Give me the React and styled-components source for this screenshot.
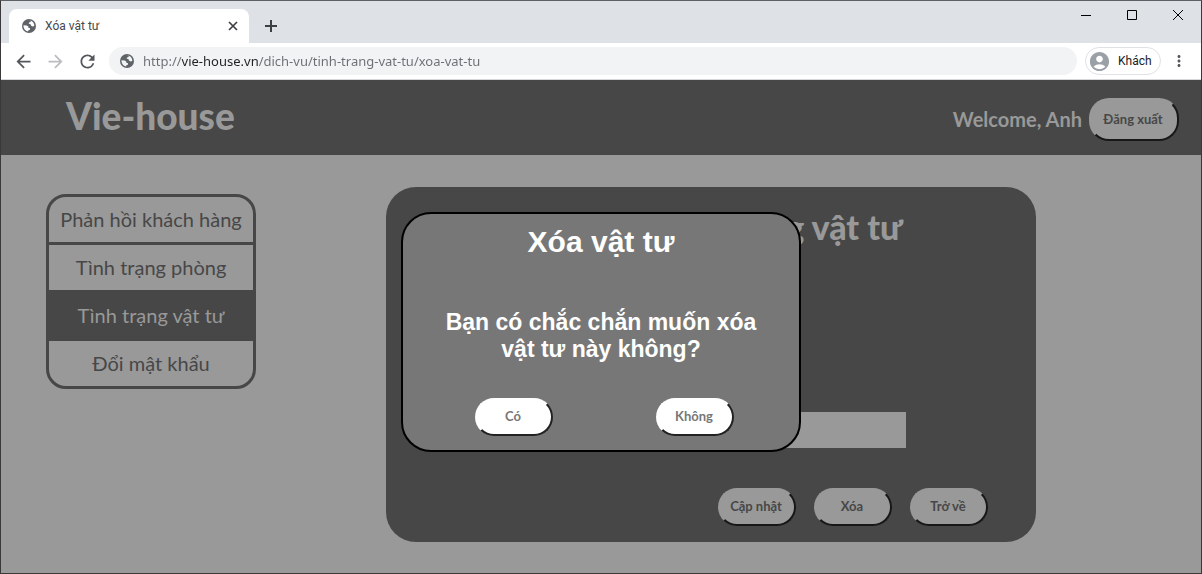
import React, { useState } from "react";
import styled, { createGlobalStyle, css } from "styled-components";
import {
  MdAccountCircle,
  MdArrowBack,
  MdArrowForward,
  MdMoreVert,
  MdRefresh,
} from "react-icons/md";

const ui = `Roboto, "Noto Sans", sans-serif`;
const lato = `Lato, "Noto Sans", sans-serif`;
const arial = `"Liberation Sans", Arial, sans-serif`;

const GlobalStyle = createGlobalStyle`
  * { box-sizing: border-box; }
  body { margin: 0; background: #999999; }
  button, input { margin: 0; font: inherit; }
  h1, h2, p, ul { margin: 0; padding: 0; }
`;

const Window = styled.div`
  display: flex;
  flex-direction: column;
  min-height: 100vh;
  border: 1px solid #3a3838;
  border-top-color: #5f6064;
  background: #999999;
`;

const TabStrip = styled.div`
  display: flex;
  align-items: flex-end;
  height: 42px;
  padding-left: 8px;
  background: #dee1e6;
`;

const Tab = styled.div`
  display: flex;
  align-items: center;
  width: 240px;
  height: 34px;
  padding: 0 9px 0 13px;
  border-radius: 8px 8px 0 0;
  background: #ffffff;
  color: #5f6368;
`;

const TabTitle = styled.span`
  flex: 1;
  margin-left: 9px;
  font: 12px/16px ${ui};
  color: #45484d;
`;

const IconButton = styled.button`
  display: grid;
  place-items: center;
  width: ${(p) => p.$width || 32}px;
  height: ${(p) => p.$height || 28}px;
  padding: 0;
  border: 0;
  background: none;
  color: ${(p) => p.$color || "#54575c"};
`;

const NewTab = styled(IconButton)`
  margin: 0 auto 3px 6px;
`;

const WindowControls = styled.div`
  display: flex;
  align-self: flex-start;
`;

const Toolbar = styled.div`
  display: flex;
  align-items: center;
  height: 37px;
  padding: 0 6px;
  border-bottom: 1px solid #d5d7da;
  background: #ffffff;
`;

const AddressBar = styled.label`
  display: flex;
  flex: 1;
  align-items: center;
  height: 28px;
  margin: 0 8px 0 6px;
  padding: 0 11px;
  border-radius: 14px;
  background: #f1f3f4;
  color: #5f6368;
`;

const AddressInput = styled.input`
  flex: 1;
  min-width: 0;
  margin-left: 9px;
  padding: 0;
  border: 0;
  outline: 0;
  background: linear-gradient(90deg, #6b6f74 39px, #202124 39px, #202124 116px, #6b6f74 116px);
  background-clip: text;
  -webkit-background-clip: text;
  -webkit-text-fill-color: transparent;
  color: #5f6368;
  font: 13px/20px "Noto Sans", sans-serif;
`;

const Profile = styled.button`
  display: flex;
  align-items: center;
  gap: 7px;
  width: 76px;
  height: 28px;
  margin-right: 2px;
  padding: 0 0 0 2px;
  border: 1px solid #dfe1e5;
  border-radius: 14px;
  background: #ffffff;
  color: #202124;
  font: 12px/16px ${ui};
`;

const SiteHeader = styled.header`
  display: flex;
  align-items: center;
  justify-content: space-between;
  height: 75px;
  padding: 0 22px 0 65px;
  background: #474747;
  color: #999999;
  font-family: ${lato};
`;

const Brand = styled.h1`
  padding-bottom: 3px;
  font-family: "Lato Black", ${lato};
  font-size: 37px;
  line-height: 44px;
  font-weight: 900;
`;

const Account = styled.div`
  display: flex;
  align-items: center;
  gap: 7px;
  padding-top: 4px;
`;

const Greeting = styled.span`
  padding-bottom: 2px;
  font-size: 20px;
  line-height: 24px;
  font-weight: 700;
`;

const PillButton = styled.button`
  width: 78px;
  height: 38px;
  padding: 0 2px 2px 0;
  border: 2px solid #999999;
  border-right-color: #181818;
  border-bottom-color: #181818;
  border-radius: 20px;
  background: #999999;
  color: #474747;
  font: 700 13px/20px ${lato};
  white-space: nowrap;

  ${(p) =>
    p.$large &&
    css`
      width: 90px;
      height: 43px;
    `}

  ${(p) =>
    p.$bright &&
    css`
      border-color: #ffffff #222222 #222222 #ffffff;
      background: #ffffff;
      color: #777777;
    `}
`;

const Content = styled.main`
  display: flex;
  align-items: flex-start;
  gap: 130px;
  padding: 32px 24px 31px 45px;
  font-family: ${lato};
`;

const SideMenu = styled.ul`
  flex: none;
  width: 210px;
  margin-top: 7px;
  border: 3px solid #474747;
  border-radius: 20px;
  overflow: hidden;
  list-style: none;
`;

const MenuItem = styled.li`
  & + & {
    border-top: 3px solid #474747;
  }
`;

const MenuLink = styled.a`
  display: block;
  height: 45px;
  background: ${(p) => (p.$active ? "#474747" : "transparent")};
  color: ${(p) => (p.$active ? "#999999" : "#474747")};
  font-size: 20px;
  line-height: 45px;
  text-align: center;
  text-decoration: none;
  white-space: nowrap;
`;

const Panel = styled.form`
  display: flex;
  flex: 0 1 650px;
  flex-direction: column;
  align-items: center;
  min-height: 355px;
  padding: 20px 48px 16px 40px;
  border-radius: 30px;
  background: #474747;
  color: #999999;
`;

const PanelTitle = styled.h2`
  font-family: "Lato Black", ${lato};
  font-size: 34px;
  line-height: 40px;
  font-weight: 900;
  white-space: nowrap;
`;

const ItemInput = styled.input`
  width: 398px;
  max-width: 100%;
  height: 36px;
  margin-top: auto;
  padding: 0 8px;
  border: 0;
  border-radius: 0;
  background: #999999;
`;

const PanelActions = styled.div`
  display: flex;
  align-self: stretch;
  justify-content: flex-end;
  gap: 18px;
  margin-top: 40px;
`;

const ModalLayer = styled.div`
  position: fixed;
  inset: 0;
  display: flex;
  align-items: flex-start;
  justify-content: center;
  padding-top: 212px;
`;

const Dialog = styled.section`
  display: flex;
  flex-direction: column;
  width: 400px;
  min-height: 240px;
  padding: 10px 0 14px;
  border: 2px solid #000000;
  border-radius: 30px;
  background: #777777;
  color: #ffffff;
  font-family: ${arial};
  font-weight: 700;
  text-align: center;
`;

const DialogTitle = styled.h2`
  font-size: 30px;
  line-height: 36px;
`;

const DialogText = styled.p`
  margin-top: 49px;
  padding: 0 30px;
  font-size: 23px;
  line-height: 27px;
`;

const DialogActions = styled.div`
  display: flex;
  justify-content: space-between;
  margin-top: auto;
  padding: 0 65px 0 72px;
`;

const Globe = ({ land = "#ffffff" }) => (
  <svg width="14" height="14" viewBox="0 0 14 14" aria-hidden="true">
    <circle cx="7" cy="7" r="7" fill="currentColor" />
    <path
      fill={land}
      d="M6.6 1.6h2.2L8.6 3 7 3.6l-.3 1.2 1.6.3.9 1.6 1.5.7 1.6-.5A5.5 5.5 0 0 0 8.8 1.7z"
    />
    <path
      fill={land}
      d="M1.5 6.2l3.2.2 1.6 1.1v1.3l1.8.5-.4 1.6-1.4.4-.2 1.2A5.5 5.5 0 0 1 1.5 6.2z"
    />
  </svg>
);

const menu = ["Phản hồi khách hàng", "Tình trạng phòng", "Tình trạng vật tư", "Đổi mật khẩu"];

export default function App() {
  const [item, setItem] = useState("");

  return (
    <>
      <GlobalStyle />
      <Window>
        <TabStrip>
          <Tab>
            <Globe />
            <TabTitle>Xóa vật tư</TabTitle>
            <IconButton $width={14} $color="#3c4043" aria-label="Đóng thẻ">
              <svg width="10" height="10" viewBox="0 0 10 10" stroke="currentColor" strokeWidth="1.7">
                <path d="M1 1l8 8M9 1L1 9" />
              </svg>
            </IconButton>
          </Tab>
          <NewTab $color="#3c4043" aria-label="Thẻ mới">
            <svg width="12" height="12" viewBox="0 0 12 12" stroke="currentColor" strokeWidth="2">
              <path d="M6 0v12M0 6h12" />
            </svg>
          </NewTab>
          <WindowControls>
            <IconButton $width={46} $color="#000000" aria-label="Thu nhỏ">
              <svg width="10" height="10" viewBox="0 0 10 10" stroke="currentColor">
                <path d="M0 5.5h10" />
              </svg>
            </IconButton>
            <IconButton $width={46} $color="#000000" aria-label="Phóng to">
              <svg width="10" height="10" viewBox="0 0 10 10" fill="none" stroke="currentColor">
                <path d="M.5.5h9v9h-9z" />
              </svg>
            </IconButton>
            <IconButton $width={46} $color="#000000" aria-label="Đóng">
              <svg width="10" height="10" viewBox="0 0 10 10" stroke="currentColor">
                <path d="M0 0l10 10M10 0L0 10" />
              </svg>
            </IconButton>
          </WindowControls>
        </TabStrip>

        <Toolbar>
          <IconButton aria-label="Quay lại">
            <MdArrowBack size={21} />
          </IconButton>
          <IconButton $color="#babcbe" aria-label="Tiến">
            <MdArrowForward size={21} />
          </IconButton>
          <IconButton aria-label="Tải lại">
            <MdRefresh size={21} />
          </IconButton>
          <AddressBar>
            <Globe land="#f1f3f4" />
            <AddressInput
              aria-label="Địa chỉ"
              defaultValue="http://vie-house.vn/dich-vu/tinh-trang-vat-tu/xoa-vat-tu"
            />
          </AddressBar>
          <Profile>
            <MdAccountCircle size={23} color="#9aa0a6" />
            Khách
          </Profile>
          <IconButton aria-label="Tùy chọn">
            <MdMoreVert size={18} />
          </IconButton>
        </Toolbar>

        <SiteHeader>
          <Brand>Vie-house</Brand>
          <Account>
            <Greeting>Welcome, Anh</Greeting>
            <PillButton $large>Đăng xuất</PillButton>
          </Account>
        </SiteHeader>

        <Content>
          <nav>
            <SideMenu>
              {menu.map((label) => (
                <MenuItem key={label}>
                  <MenuLink href="#" $active={label === "Tình trạng vật tư"}>
                    {label}
                  </MenuLink>
                </MenuItem>
              ))}
            </SideMenu>
          </nav>

          <Panel onSubmit={(e) => e.preventDefault()}>
            <PanelTitle>Cập nhật tình trạng vật tư</PanelTitle>
            <ItemInput
              aria-label="Vật tư"
              value={item}
              onChange={(e) => setItem(e.target.value)}
            />
            <PanelActions>
              <PillButton>Cập nhật</PillButton>
              <PillButton type="button">Xóa</PillButton>
              <PillButton type="button">Trở về</PillButton>
            </PanelActions>
          </Panel>
        </Content>
      </Window>

      <ModalLayer>
        <Dialog role="dialog" aria-modal="true" aria-labelledby="dialog-title">
          <DialogTitle id="dialog-title">Xóa vật tư</DialogTitle>
          <DialogText>Bạn có chắc chắn muốn xóa vật tư này không?</DialogText>
          <DialogActions>
            <PillButton $bright>Có</PillButton>
            <PillButton $bright>Không</PillButton>
          </DialogActions>
        </Dialog>
      </ModalLayer>
    </>
  );
}
